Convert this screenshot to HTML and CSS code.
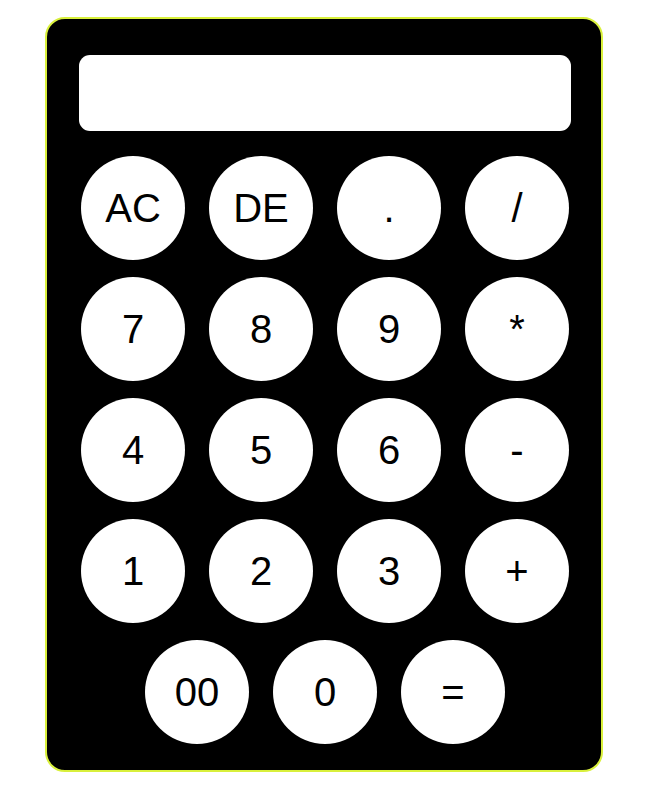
FILE: index.html
```html
<!DOCTYPE html>
<html>
<head>
<meta charset="utf-8">
<link rel="stylesheet" href="styles.css">
</head>
<body>
<div class="calc">
  <div class="display"></div>
  <div class="keys">
    <button class="key">AC</button>
    <button class="key">DE</button>
    <button class="key">.</button>
    <button class="key">/</button>
    <button class="key">7</button>
    <button class="key">8</button>
    <button class="key">9</button>
    <button class="key">*</button>
    <button class="key">4</button>
    <button class="key">5</button>
    <button class="key">6</button>
    <button class="key">-</button>
    <button class="key">1</button>
    <button class="key">2</button>
    <button class="key">3</button>
    <button class="key">+</button>
  </div>
  <div class="last-row">
    <button class="key">00</button>
    <button class="key">0</button>
    <button class="key">=</button>
  </div>
</div>
</body>
</html>
```
FILE: styles.css
```css
html, body {
  margin: 0;
  padding: 0;
  background: #ffffff;
}
body {
  font-family: "Liberation Sans", Arial, sans-serif;
}
.calc {
  box-sizing: border-box;
  width: 558px;
  margin: 17px 0 0 45px;
  background: #000;
  border: 2px solid #d9f03c;
  border-radius: 20px;
  padding: 36px 30px 26px 32px;
  display: flex;
  flex-direction: column;
  align-items: center;
}
.display {
  width: 492px;
  height: 76px;
  background: #fff;
  border-radius: 11px;
  margin-bottom: 25px;
}
.keys {
  display: grid;
  grid-template-columns: repeat(4, 104px);
  column-gap: 24px;
  row-gap: 17px;
}
.last-row {
  display: flex;
  gap: 24px;
  margin-top: 17px;
}
.key {
  width: 104px;
  height: 104px;
  border: none;
  border-radius: 50%;
  background: #fff;
  color: #000;
  font-family: "Liberation Sans", Arial, sans-serif;
  font-size: 40px;
  padding: 0;
  margin: 0;
  display: flex;
  align-items: center;
  justify-content: center;
}
```
